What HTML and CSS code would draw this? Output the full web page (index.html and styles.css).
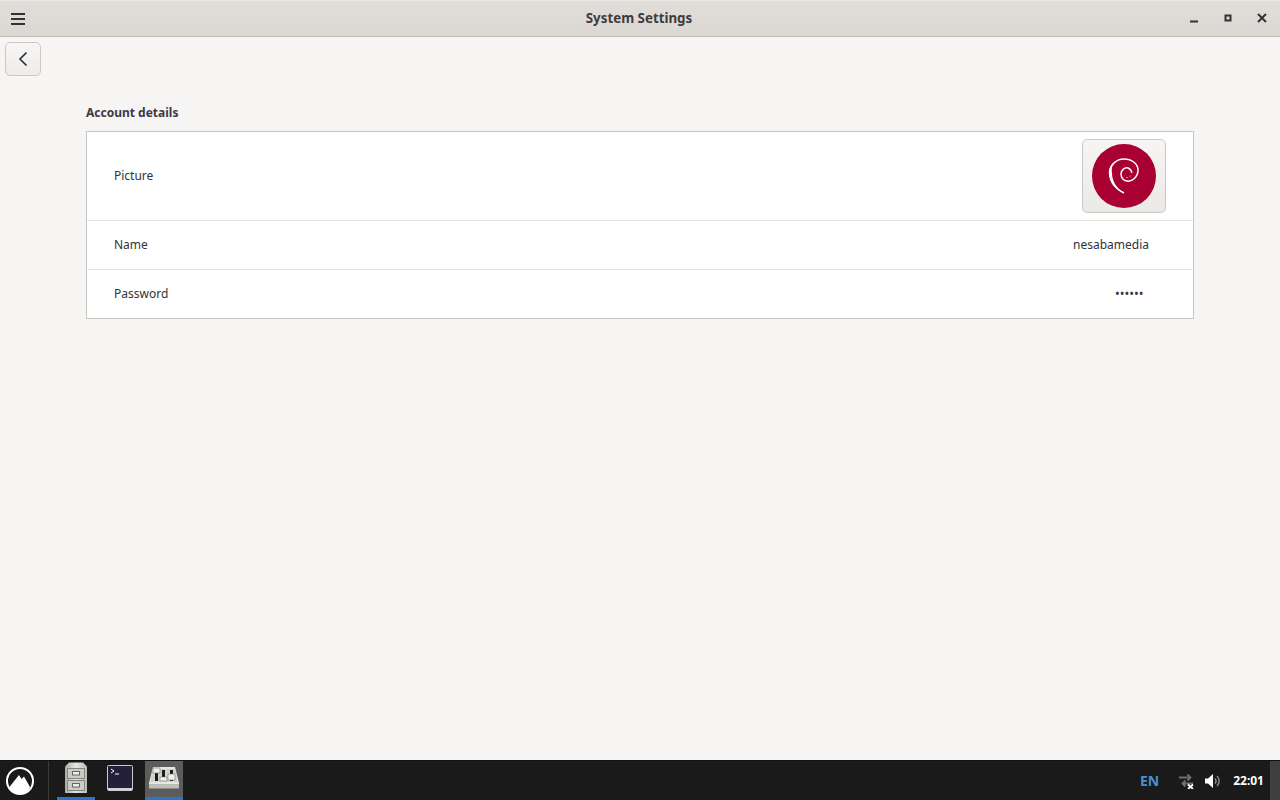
FILE: index.html
```html
<!DOCTYPE html>
<html lang="en">
<head>
<meta charset="utf-8">
<title>System Settings</title>
<link rel="stylesheet" href="styles.css">
</head>
<body>
<div class="window">
  <header class="titlebar">
    <button class="tb-menu" aria-label="Menu">
      <svg width="14" height="12" viewBox="0 0 14 12"><path d="M0 1h14M0 6h14M0 11h14" stroke="#2e3436" stroke-width="2"/></svg>
    </button>
    <div class="tb-title">System Settings</div>
    <div class="tb-controls">
      <svg class="wc" width="10" height="10" viewBox="0 0 10 10"><path d="M1 8.500h8" stroke="#2e3436" stroke-width="2"/></svg>
      <svg class="wc" width="10" height="10" viewBox="0 0 10 10"><rect x="2.500" y="2.500" width="5" height="5" fill="none" stroke="#2e3436" stroke-width="2"/></svg>
      <svg class="wc" width="10" height="10" viewBox="0 0 10 10"><path d="M1 1l8 8M9 1l-8 8" stroke="#2e3436" stroke-width="2"/></svg>
    </div>
  </header>
  <main class="content">
    <div class="toolbar">
      <button class="back" aria-label="Back">
        <svg width="10" height="16" viewBox="0 0 10 16"><path d="M8.500 1.500L2 8l6.500 6.500" fill="none" stroke="#2e3436" stroke-width="1.700"/></svg>
      </button>
    </div>
    <section class="section">
      <h2 class="section-title">Account details</h2>
      <div class="list">
        <div class="row row-picture">
          <span class="label">Picture</span>
          <button class="avatar-btn" aria-label="Picture">
            <svg width="64" height="64" viewBox="0 0 64 64">
              <circle cx="32" cy="32" r="32" fill="#a80030"/>
              <path d="M32 49C24 45 18 38 18 29C18 20 25 15 32 15C40 15 46 20 46 26C46 33 40 38 35 37C31 37 29 33 29 30C29 26 33 23 36 24C38 25 40 27 39.500 29" fill="none" stroke="#fff" stroke-width="1.500"/>
              <path d="M33 49.500C24 46 17 39 16.800 29C16.800 24 19 21 21 19C19.500 23 19.500 26 20 30C20.500 38 25 45 33 49.500Z" fill="#fff"/>
              <circle cx="35" cy="33.500" r=".6" fill="#fff"/>
              <circle cx="38" cy="32" r=".5" fill="#fff"/>
            </svg>
          </button>
        </div>
        <div class="row row-text">
          <span class="label">Name</span>
          <span class="label value-name">nesabamedia</span>
        </div>
        <div class="row row-text">
          <span class="label">Password</span>
          <span class="label value-pass">••••••</span>
        </div>
      </div>
    </section>
  </main>
  <footer class="panel">
    <div class="start">
      <svg width="30" height="30" viewBox="0 0 30 30">
        <circle cx="15" cy="15" r="13" fill="none" stroke="#fff" stroke-width="2"/>
        <path d="M4 21.500L14 9l2.500 4 2.500-2.500 6 10.500C23 26 19 28 15 28C10.500 28 6 25.500 4 21.500Z" fill="#fff"/>
      </svg>
    </div>
    <div class="sep"></div>
    <div class="task active-underline">
      <svg width="24" height="32" viewBox="0 0 24 32">
        <defs><linearGradient id="cab" x1="0" y1="0" x2="1" y2="0"><stop offset="0" stop-color="#a9ada6"/><stop offset=".5" stop-color="#e6e8e3"/><stop offset="1" stop-color="#b8bcb5"/></linearGradient></defs>
        <path d="M3 2.500L5 .5h14l2 2 2 2v26.500H1V4.500Z" fill="url(#cab)"/>
        <rect x="3.500" y="6.500" width="17" height="10" fill="#c9ccc5" stroke="#82867f"/>
        <rect x="3.500" y="18.500" width="17" height="10" fill="#c9ccc5" stroke="#82867f"/>
        <rect x="8.500" y="9.500" width="7" height="3.500" fill="#eceee9" stroke="#666"/>
        <rect x="8.500" y="21.500" width="7" height="3.500" fill="#eceee9" stroke="#666"/>
      </svg>
    </div>
    <div class="task">
      <svg width="26" height="26" viewBox="0 0 26 26">
        <rect x=".5" y=".5" width="25" height="25" rx="1" fill="#241f3a" stroke="#c9cbc8"/>
        <rect x="1" y="23" width="24" height="2.500" fill="#d4d5d2"/>
        <path d="M4 4l3 2-3 2" fill="none" stroke="#fff"/>
        <path d="M8 9h4" stroke="#fff"/>
      </svg>
    </div>
    <div class="task active-bg active-underline">
      <svg width="30" height="24" viewBox="0 0 30 24">
        <path d="M4 1h22l4 16v5H0v-5Z" fill="#e6e6e3"/>
        <path d="M0 18h30v4.500H0Z" fill="#bdbdb9"/>
        <path d="M4 3h22l3 13H1Z" fill="#d2d2cf"/>
        <path d="M7.500 4v11M14.500 4v11M22.500 4v11" stroke="#1c1c1c" stroke-width="3"/>
        <rect x="4" y="2" width="7" height="5" fill="#efefec" stroke="#777" stroke-width=".6"/>
        <rect x="11" y="11" width="7" height="4" fill="#efefec" stroke="#777" stroke-width=".6"/>
        <rect x="19" y="8" width="7" height="6" fill="#efefec" stroke="#777" stroke-width=".6"/>
      </svg>
    </div>
    <div class="tray">
      <span class="lang">EN</span>
      <svg width="16" height="16" viewBox="0 0 16 16">
        <path d="M1 4.500h11M9.500 1.500l3 3-3 3M15 10.500H5M7.500 7.500l-3 3 3 3" fill="none" stroke="#6f6f6f" stroke-width="1.800"/>
        <path d="M10 11.500l5 4.500M15 11.500l-5 4.500" stroke="#fff" stroke-width="1.800"/>
      </svg>
      <svg width="16" height="16" viewBox="0 0 16 16">
        <path d="M0 5.500h3L8 1v14L3 10.500H0Z" fill="#fff"/>
        <path d="M10 5.500a3.500 3.500 0 0 1 0 5M12 3a7 7 0 0 1 0 10" fill="none" stroke="#8a8a8a" stroke-width="1.500"/>
      </svg>
      <span class="clock">22:01</span>
    </div>
    <div class="show-desktop"></div>
  </footer>
</div>
</body>
</html>
```

FILE: styles.css
```css
* { box-sizing: border-box; }
html, body { margin: 0; height: 100%; }
body {
  font-family: "Noto Sans", "Open Sans", sans-serif;
  font-size: 12px;
  color: #2e3436;
  background: #f6f5f4;
  overflow: hidden;
}
button { font: inherit; color: inherit; padding: 0; }
.window { display: flex; flex-direction: column; height: 800px; }

.titlebar {
  flex: 0 0 37px;
  display: grid;
  grid-template-columns: 1fr auto 1fr;
  align-items: center;
  padding: 0 13px 2px 11px;
  background: linear-gradient(#e1deda, #dbd8d3);
  border-bottom: 1px solid #c0b9af;
  border-top: 1px solid #ece9e6;
}
.tb-menu { border: 0; background: none; display: flex; justify-self: start; margin-top: 2px; }
.tb-title { font-size: 13.330px; font-weight: 700; color: #3d3d3d; margin-top: 1px; }
.tb-controls { justify-self: end; display: flex; gap: 24px; align-items: center; }

.content { flex: 1; display: flex; flex-direction: column; }
.toolbar { padding: 5px 5px 0; }
.back {
  display: flex;
  align-items: center;
  justify-content: center;
  width: 36px;
  height: 34px;
  background: linear-gradient(#f7f6f5, #eeecea);
  border: 1px solid #cdc7c2;
  border-radius: 5px;
}
.section { padding: 27px 86px 0; }
.section-title {
  margin: 0 0 8px;
  font-size: 12px;
  line-height: 20px;
  font-weight: 700;
  color: #3d3846;
}
.list { background: #fff; border: 1px solid #c9c5c0; }
.row {
  display: flex;
  justify-content: space-between;
  align-items: center;
  padding-left: 27px;
  border-bottom: 1px solid #e3e2e0;
}
.row:last-child { border-bottom: 0; }
.row-picture { height: 89px; padding-right: 27px; }
.row-text { height: 49px; }
.row-text:last-child { height: 48px; }
.label { margin-bottom: 2px; }
.avatar-btn {
  display: flex;
  align-items: center;
  justify-content: center;
  width: 84px;
  height: 74px;
  background: linear-gradient(#f6f5f4, #ebe9e7);
  border: 1px solid #cdc7c2;
  border-radius: 5px;
}
.value-name { margin-right: 44px; }
.value-pass { margin-right: 49px; letter-spacing: 1px; font-size: 10px; font-weight: 700; color: #3d3846; }

.panel {
  flex: 0 0 40px;
  display: flex;
  align-items: stretch;
  background: #1a1a1a;
  border-top: 1px solid #111;
}
.start { width: 40px; display: flex; align-items: center; justify-content: center; }
.sep { width: 1px; margin: 0 8px; background: #3a3a3a; }
.task { width: 38px; display: flex; align-items: center; justify-content: center; padding-bottom: 3px; margin-right: 6px; border-bottom: 3px solid transparent; }
.task:last-of-type { margin-right: 0; }
.active-underline { border-bottom-color: #2a76c6; }
.active-bg { background: #5c5c5c; }
.tray { margin-left: auto; display: flex; align-items: center; gap: 11px; padding-right: 6px; }
.lang { font-size: 14px; font-weight: 700; color: #4a90d0; margin-right: 8px; }
.clock { font-size: 12px; font-weight: 700; color: #fff; margin-left: 1px; }
.show-desktop { width: 10px; background: #3f3f3f; }
```
